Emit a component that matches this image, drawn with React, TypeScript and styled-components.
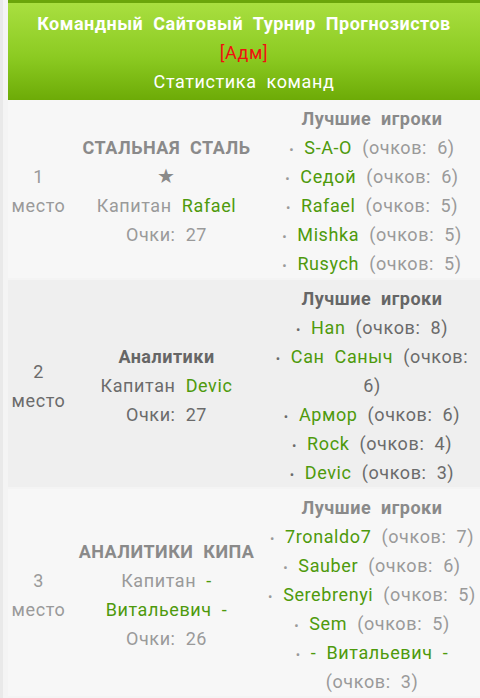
import React from "react";
import styled, { createGlobalStyle } from "styled-components";

type Player = { name: string; points: number };
type Team = {
  place: number;
  name: string;
  star?: boolean;
  captain: string;
  points: number;
  players: Player[];
  active?: boolean;
};

const teams: Team[] = [
  {
    place: 1,
    name: "СТАЛЬНАЯ СТАЛЬ",
    star: true,
    captain: "Rafael",
    points: 27,
    players: [
      { name: "S-A-O", points: 6 },
      { name: "Седой", points: 6 },
      { name: "Rafael", points: 5 },
      { name: "Mishka", points: 5 },
      { name: "Rusych", points: 5 },
    ],
  },
  {
    place: 2,
    name: "Аналитики",
    captain: "Devic",
    points: 27,
    active: true,
    players: [
      { name: "Han", points: 8 },
      { name: "Сан Саныч", points: 6 },
      { name: "Армор", points: 6 },
      { name: "Rock", points: 4 },
      { name: "Devic", points: 3 },
    ],
  },
  {
    place: 3,
    name: "АНАЛИТИКИ КИПА",
    captain: "- Витальевич -",
    points: 26,
    players: [
      { name: "7ronaldo7", points: 7 },
      { name: "Sauber", points: 6 },
      { name: "Serebrenyi", points: 5 },
      { name: "Sem", points: 5 },
      { name: "- Витальевич -", points: 3 },
    ],
  },
];

const GlobalStyle = createGlobalStyle`
  html, body {
    margin: 0;
    padding: 0;
    background: #f4f4f4;
  }
  body {
    padding-left: 8px;
    box-shadow: inset 3px 0 0 #e9e9e9;
    font-family: Roboto, "Noto Sans", sans-serif;
    font-size: 18px;
    line-height: 29px;
    letter-spacing: 0.6px;
    word-spacing: 5px;
  }
`;

const Page = styled.div`
  display: flex;
  flex-direction: column;
`;

const Header = styled.div`
  height: 97px;
  border-top: 3px solid #6ba50b;
  background: linear-gradient(#a9df40, #8ccb22 55%, #6dab07);
  color: #fff;
  text-align: center;
`;

const Title = styled.div`
  font-weight: bold;
  letter-spacing: 0.5px;
  padding-top: 7px;
  line-height: 28px;
`;

const Admin = styled.div`
  color: #f01010;
  line-height: 29px;
`;

const Subtitle = styled.div`
  line-height: 29px;
`;

const Row = styled.div<{ $active?: boolean }>`
  display: grid;
  grid-template-columns: 61px 195px 1fr;
  align-items: center;
  padding: 4px 0 0;
  margin-bottom: 2px;
  text-align: center;
  background: ${(p) => (p.$active ? "#efefef" : "#f7f7f7")};
  color: ${(p) => (p.$active ? "#6b6b6b" : "#9a9a9a")};
`;

const Place = styled.div``;

const TeamCell = styled.div`
  padding: 0 4px;
`;

const TeamName = styled.div<{ $active?: boolean }>`
  font-weight: bold;
  letter-spacing: 0.5px;
  color: ${(p) => (p.$active ? "#666" : "#8a8a8a")};
`;

const Star = styled.div`
  font-size: 20px;
  color: #8a8a8a;
`;

const Green = styled.span`
  color: #4e9a0c;
`;

const PlayersCell = styled.div`
  padding: 0 2px;
`;

const PlayersTitle = styled.div<{ $active?: boolean }>`
  font-weight: bold;
  letter-spacing: 0.5px;
  color: ${(p) => (p.$active ? "#666" : "#8a8a8a")};
`;

const Bullet = styled.span`
  font-size: 13px;
  line-height: 1;
`;

export default function App(): JSX.Element {
  return (
    <Page>
      <GlobalStyle />
      <Header>
        <Title>Командный Сайтовый Турнир Прогнозистов</Title>
        <Admin>[Адм]</Admin>
        <Subtitle>Статистика команд</Subtitle>
      </Header>
      {teams.map((t) => (
        <Row key={t.place} $active={t.active}>
          <Place>
            {t.place}
            <br />
            место
          </Place>
          <TeamCell>
            <TeamName $active={t.active}>{t.name}</TeamName>
            {t.star && <Star>★</Star>}
            <div>
              Капитан <Green>{t.captain}</Green>
            </div>
            <div>Очки: {t.points}</div>
          </TeamCell>
          <PlayersCell>
            <PlayersTitle $active={t.active}>Лучшие игроки</PlayersTitle>
            {t.players.map((p) => (
              <div key={p.name}>
                <Bullet>•</Bullet> <Green>{p.name}</Green> (очков: {p.points})
              </div>
            ))}
          </PlayersCell>
        </Row>
      ))}
    </Page>
  );
}
